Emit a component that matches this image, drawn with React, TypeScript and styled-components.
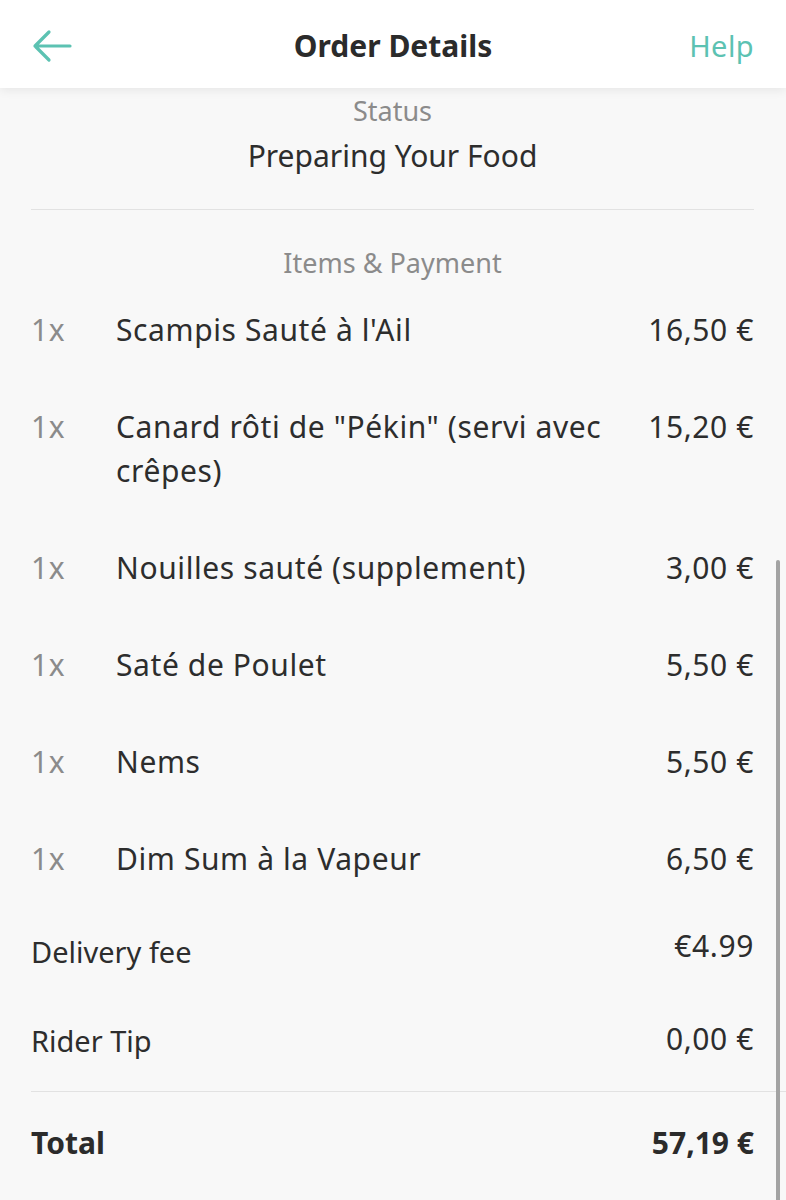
import React from 'react'
import styled, { createGlobalStyle } from 'styled-components'

const GlobalStyle = createGlobalStyle`
  html, body {
    margin: 0;
    padding: 0;
    background: #f8f8f8;
  }
  body {
    font-family: 'Noto Sans', Roboto, sans-serif;
    color: #2d2d2d;
    overflow: hidden;
  }
`

const TEAL = '#5cc2b2'

const Page = styled.div`
  min-height: 1200px;
  background: #f8f8f8;
  position: relative;
`

const Header = styled.header`
  height: 88px;
  background: #fff;
  display: grid;
  grid-template-columns: 1fr auto 1fr;
  align-items: center;
  padding: 0 32px;
  box-shadow: 0 2px 10px rgba(0, 0, 0, 0.08);
  position: relative;
  z-index: 1;
`

const BackButton = styled.button`
  justify-self: start;
  background: none;
  border: 0;
  padding: 0;
  display: flex;
  align-items: center;
  cursor: pointer;
  margin-top: 4px;
`

const Title = styled.h1`
  margin: 0;
  font-size: 30px;
  line-height: 40px;
  font-weight: 700;
  color: #2b2b2b;
  margin-top: 4px;
`

const HelpLink = styled.a`
  justify-self: end;
  color: ${TEAL};
  font-size: 29px;
  line-height: 40px;
  letter-spacing: 0.4px;
  text-decoration: none;
  margin-top: 4px;
`

const Content = styled.main`
  padding: 8px 32px 0 31px;
`

const Caption = styled.div`
  text-align: center;
  color: #8b8b8b;
  font-size: 27px;
  line-height: 30px;
`

const StatusText = styled.div`
  text-align: center;
  font-size: 30px;
  line-height: 40px;
  margin-top: 10px;
  color: #2d2d2d;
`

const Divider = styled.hr<{ $bleed?: boolean }>`
  border: 0;
  height: 1px;
  background: #e2e2e2;
  margin: 0;
  margin-right: ${({ $bleed }) => ($bleed ? '-32px' : '0')};
`

const TopDivider = styled(Divider)`
  margin-top: 33px;
  margin-bottom: 38px;
`

const BottomDivider = styled(Divider)`
  margin-top: 6px;
`

const ItemList = styled.div`
  margin-top: 3px;
`

const ItemRow = styled.div`
  display: grid;
  grid-template-columns: 85px 1fr auto;
  column-gap: 28px;
  padding: 26.5px 0;
  font-size: 30px;
  line-height: 44px;
  letter-spacing: 0.6px;
`

const Qty = styled.span`
  color: #8b8b8b;
`

const ItemName = styled.span`
  color: #2d2d2d;
  margin-left: -28px;
  padding-right: 10px;
`

const Price = styled.span`
  text-align: right;
  color: #2d2d2d;
`

const FeeRow = styled.div<{ $offset: number }>`
  display: flex;
  justify-content: space-between;
  align-items: flex-start;
  padding: 22.5px 0;
  font-size: 29px;
  line-height: 44px;

  & > span:last-child {
    letter-spacing: 0.6px;
    font-size: 30px;
    transform: translateY(${({ $offset }) => -$offset}px);
  }
`

const TotalRow = styled.div`
  display: flex;
  justify-content: space-between;
  align-items: center;
  padding: 29px 0;
  font-size: 30px;
  line-height: 44px;
  font-weight: 700;
  color: #2b2b2b;
`

const ScrollThumb = styled.div`
  position: fixed;
  right: 6px;
  top: 560px;
  bottom: 0;
  width: 4px;
  border-radius: 2px 2px 0 0;
  background: #a3a3a3;
`

const items = [
  { qty: '1x', name: "Scampis Sauté à l'Ail", price: '16,50 €' },
  { qty: '1x', name: 'Canard rôti de "Pékin" (servi avec crêpes)', price: '15,20 €' },
  { qty: '1x', name: 'Nouilles sauté (supplement)', price: '3,00 €' },
  { qty: '1x', name: 'Saté de Poulet', price: '5,50 €' },
  { qty: '1x', name: 'Nems', price: '5,50 €' },
  { qty: '1x', name: 'Dim Sum à la Vapeur', price: '6,50 €' },
]

function BackArrow() {
  return (
    <svg width="40" height="34" viewBox="0 0 40 34" fill="none">
      <path
        d="M38 17H3M17 3L3 17l14 14"
        stroke={TEAL}
        strokeWidth="3.2"
        strokeLinecap="round"
        strokeLinejoin="round"
      />
    </svg>
  )
}

export default function App() {
  return (
    <Page>
      <GlobalStyle />
      <Header>
        <BackButton aria-label="Back">
          <BackArrow />
        </BackButton>
        <Title>Order Details</Title>
        <HelpLink href="#">Help</HelpLink>
      </Header>
      <Content>
        <Caption>Status</Caption>
        <StatusText>Preparing Your Food</StatusText>
        <TopDivider />
        <Caption>Items &amp; Payment</Caption>
        <ItemList>
          {items.map((item) => (
            <ItemRow key={item.name}>
              <Qty>{item.qty}</Qty>
              <ItemName>{item.name}</ItemName>
              <Price>{item.price}</Price>
            </ItemRow>
          ))}
        </ItemList>
        <FeeRow $offset={6}>
          <span>Delivery fee</span>
          <span>€4.99</span>
        </FeeRow>
        <FeeRow $offset={2}>
          <span>Rider Tip</span>
          <span>0,00 €</span>
        </FeeRow>
        <BottomDivider $bleed />
        <TotalRow>
          <span>Total</span>
          <span>57,19 €</span>
        </TotalRow>
      </Content>
      <ScrollThumb />
    </Page>
  )
}
